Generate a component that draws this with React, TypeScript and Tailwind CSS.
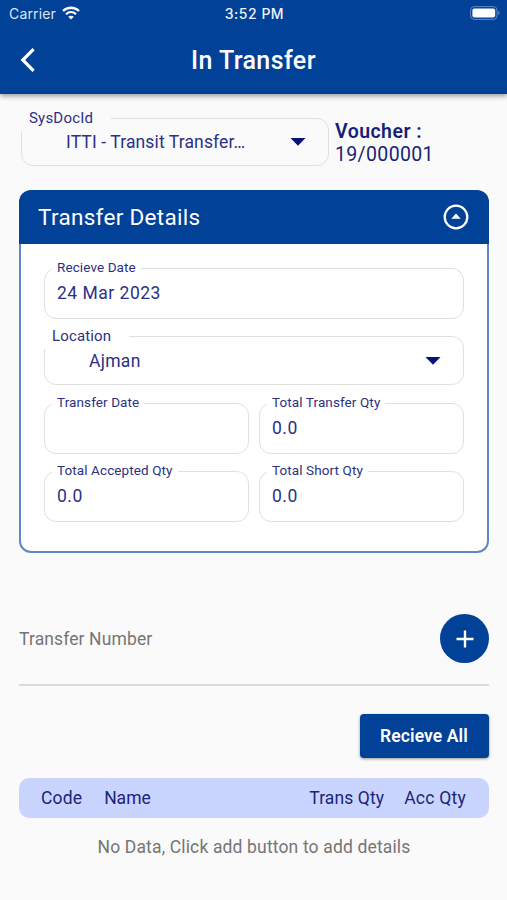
import React from 'react';

interface OutlinedFieldProps {
  label: string;
  value?: string;
}

const OutlinedField: React.FC<OutlinedFieldProps> = ({ label, value }) => {
  return (
    <div className="relative h-[51px] rounded-xl border border-[#e0e0e0] px-3 pt-[12px]">
      <span className="absolute left-[7px] -top-[10px] bg-white px-[5px] text-[13.5px] leading-4 tracking-[0.1px] whitespace-nowrap">
        {label}
      </span>
      <span className="block text-[17.5px] leading-6 tracking-[0.5px]">
        {value}
      </span>
    </div>
  );
};

const DropdownArrow: React.FC = () => {
  return (
    <svg width="16" height="8" viewBox="0 0 16 8" fill="#06127a">
      <path d="M0.5 0h15L8 7.7z" />
    </svg>
  );
};

const StatusBar: React.FC = () => {
  return (
    <div className="grid h-[26px] grid-cols-3 items-center pl-[9px] pr-[7px] font-['Inter',sans-serif] text-[14px]">
      <div className="flex items-center gap-1.5 text-[#dbe6f6]">
        <span className="text-[14px] tracking-[0.15px]">Carrier</span>
        <svg width="18" height="14" viewBox="0 0 18 14" fill="none" stroke="#fff">
          <path d="M1 5C5.500 .6 12.500 .6 17 5" strokeWidth="2.400" />
          <path d="M4 8.200c2.900-2.700 7.100-2.700 10 0" strokeWidth="2.200" />
          <path d="M9 13.600 6.200 10.700c1.600-1.400 4-1.400 5.600 0z" fill="#fff" stroke="none" />
        </svg>
      </div>
      <span className="text-center font-medium tracking-[0.5px] text-[#eef3fb]">
        3:52 PM
      </span>
      <div className="flex justify-end">
        <svg width="30" height="14" viewBox="0 0 30 14">
          <rect x=".6" y=".6" width="26.400" height="12.800" rx="3.600" fill="none" stroke="#5f8ac4" />
          <rect x="2.400" y="2.400" width="22.800" height="9.200" rx="2" fill="#fff" />
          <path d="M28.200 4.800c1.800.7 1.800 3.700 0 4.400z" fill="#5f8ac4" />
        </svg>
      </div>
    </div>
  );
};

const App: React.FC = () => {
  return (
    <div className="h-[900px] w-[507px] overflow-hidden bg-[#fafafa] font-['Roboto',sans-serif] text-[#2b3184]">
      <header className="h-[94px] bg-[#014197] shadow-[0_2px_5px_rgba(0,0,0,0.4)]">
        <StatusBar />
        <div className="grid h-[68px] grid-cols-[60px_1fr_60px] items-center">
          <svg className="ml-5" width="16" height="24" viewBox="0 0 16 24" fill="none" stroke="#fff" strokeWidth="3.200">
            <path d="M13.600 1.200 2.800 12l10.800 10.800" />
          </svg>
          <h1 className="pt-px text-center text-[25px] font-medium tracking-[0.4px] text-white">
            In Transfer
          </h1>
        </div>
      </header>

      <main className="pl-[19px] pr-[18px]">
        <div className="flex gap-1.5 pl-0.5 pt-6">
          <div className="relative flex h-12 w-[308px] items-center justify-between rounded-xl border border-[#e0e0e0] pl-11 pr-[22px]">
            <span className="absolute -left-px -top-3 h-6 w-[90px] bg-[#fafafa] pl-2 text-[15px] leading-[22px] tracking-[0.2px]">
              SysDocId
            </span>
            <span className="relative text-[17.5px] tracking-[0.12px]">
              ITTI - Transit Transfer…
            </span>
            <DropdownArrow />
          </div>
          <div className="-mb-0.5 pt-0.5 text-[19.5px] leading-[23px] text-[#171f76]">
            <p className="font-semibold tracking-[0.45px]">Voucher :</p>
            <p className="tracking-[0.35px]">19/000001</p>
          </div>
        </div>

        <section className="mt-6">
          <div className="flex h-[54px] items-center justify-between rounded-t-xl bg-[#014197] pl-[19px] pr-5 text-white">
            <h2 className="pt-0.5 text-[22.5px] tracking-[0.3px]">Transfer Details</h2>
            <svg width="26" height="26" viewBox="0 0 26 26" fill="none">
              <circle cx="13" cy="13" r="11.300" stroke="#fff" strokeWidth="2.300" />
              <path d="M8.300 14.800h9.400L13 9.600z" fill="#fff" />
            </svg>
          </div>
          <div className="flex h-[309px] flex-col rounded-b-xl border-2 border-t-0 border-[#5f87c1] bg-white px-[23px] pt-6">
            <OutlinedField label="Recieve Date" value="24 Mar 2023" />
            <div className="relative mt-[17px] flex h-[49px] items-center justify-between rounded-xl border border-[#e0e0e0] pl-11 pr-[22px]">
              <span className="absolute -left-px -top-3 h-6 w-[85px] bg-white pl-2 text-[15px] leading-[22px] tracking-[0.15px]">
                Location
              </span>
              <span className="relative pt-px text-[17.5px] tracking-[0.3px]">Ajman</span>
              <DropdownArrow />
            </div>
            <div className="mt-[18px] grid grid-cols-2 gap-x-2.5 gap-y-[17px]">
              <OutlinedField label="Transfer Date" />
              <OutlinedField label="Total Transfer Qty" value="0.0" />
              <OutlinedField label="Total Accepted Qty" value="0.0" />
              <OutlinedField label="Total Short Qty" value="0.0" />
            </div>
          </div>
        </section>

        <div className="mt-[61px] flex h-[72px] items-start justify-between border-b-2 border-[#dbdbdb]">
          <span className="text-[17.5px] leading-[51px] tracking-[0.12px] text-[#757575]">
            Transfer Number
          </span>
          <button className="flex size-[49px] items-center justify-center rounded-full bg-[#014197]">
            <svg width="18" height="18" viewBox="0 0 18 18" stroke="#fff" strokeWidth="2.400">
              <path d="M9 .5v17M.5 9h17" />
            </svg>
          </button>
        </div>

        <div className="mt-7 flex justify-end">
          <button className="h-11 w-[129px] rounded bg-[#014197] pr-px pt-px text-[17.5px] font-semibold tracking-[0.1px] text-white shadow-[0_1px_3px_rgba(0,0,0,0.4)]">
            Recieve All
          </button>
        </div>

        <div className="mt-5 flex h-10 items-center justify-between rounded-[10px] bg-[#c9d5ff] pl-[22px] pr-[23px] text-[17.5px] text-[#1c247b]">
          <div className="flex gap-[22px]">
            <span className="tracking-[0.15px]">Code</span>
            <span>Name</span>
          </div>
          <div className="flex gap-5">
            <span className="tracking-[0.1px]">Trans Qty</span>
            <span className="tracking-[0.25px]">Acc Qty</span>
          </div>
        </div>
        <p className="mt-[17px] text-center text-[17.5px] leading-6 tracking-[0.15px] text-[#757575]">
          No Data, Click add button to add details
        </p>
      </main>
    </div>
  );
};

export default App;
